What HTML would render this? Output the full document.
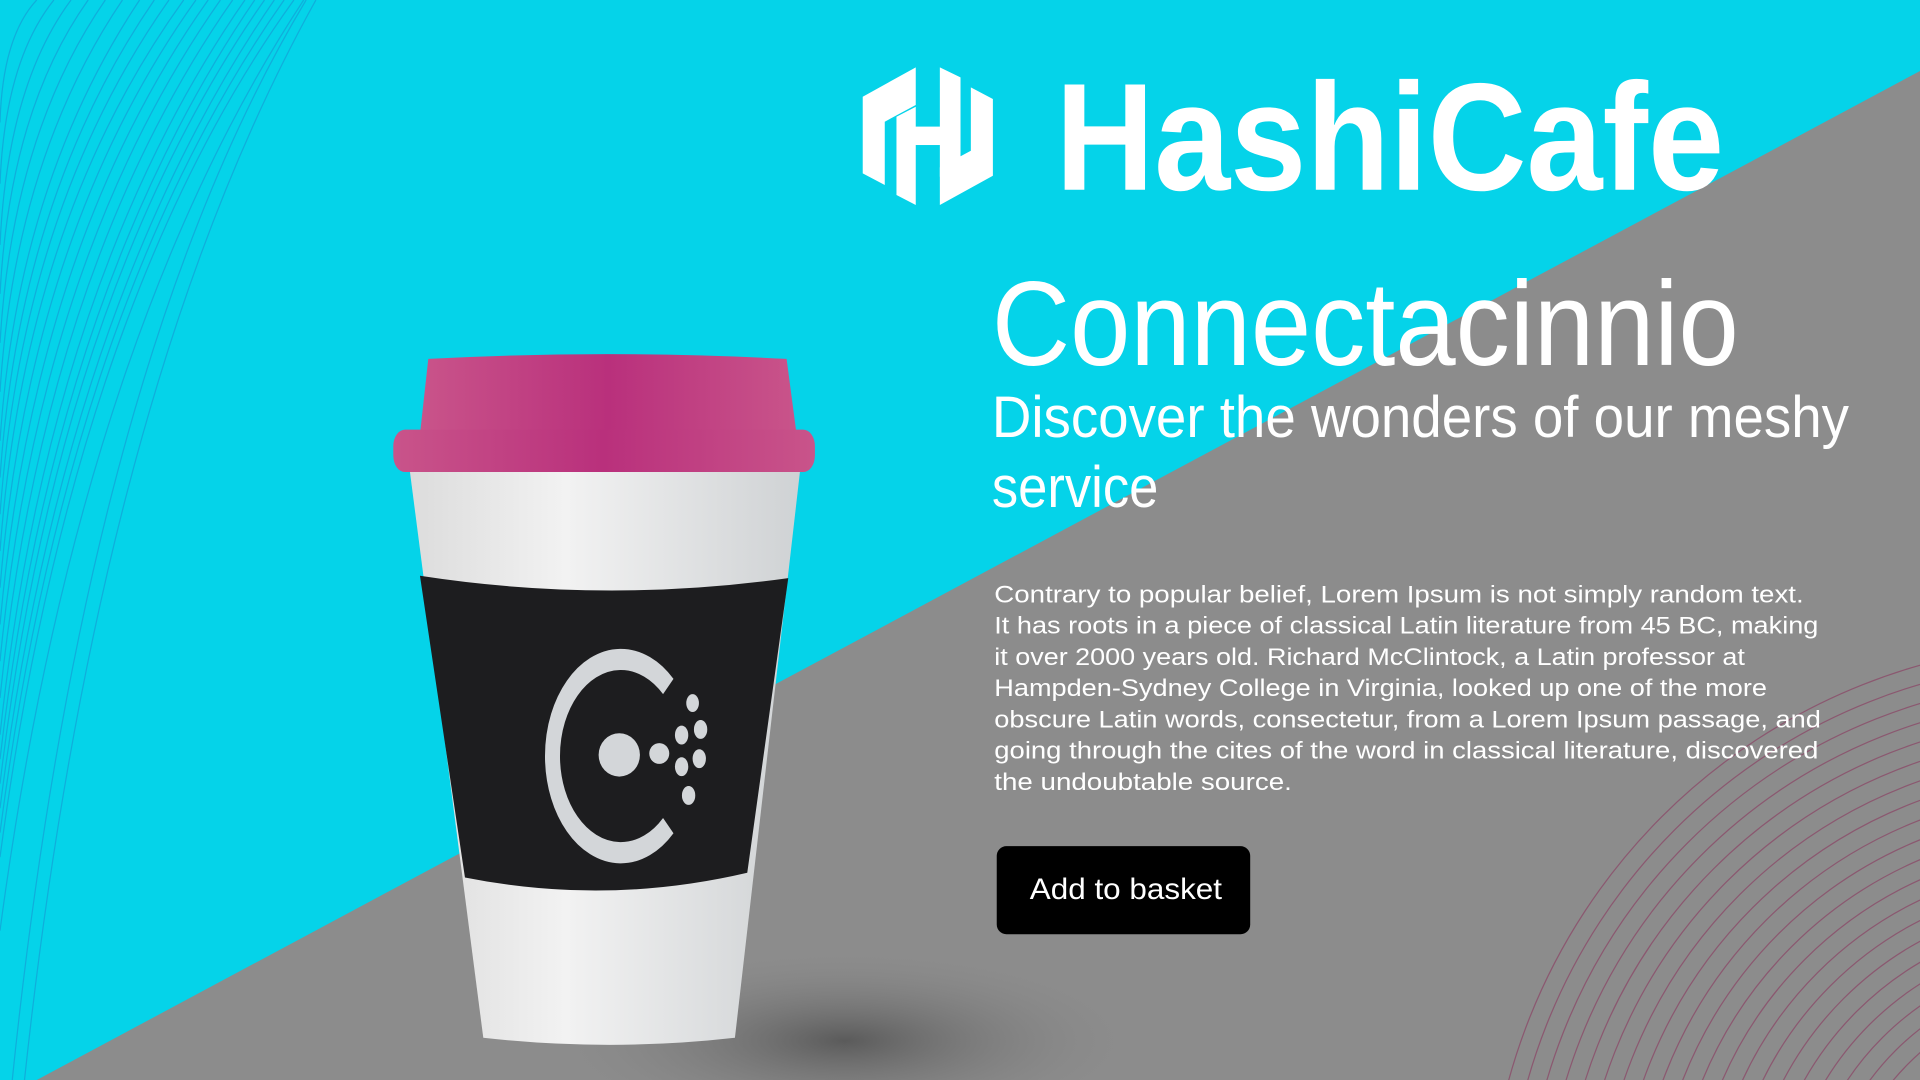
<!DOCTYPE html>
<html><head><meta charset="utf-8"><style>
html,body{margin:0;padding:0;width:1920px;height:1080px;overflow:hidden;background:#05d3e9}
svg{display:block;overflow:hidden}
</style></head><body>
<svg width="1920" height="1080" viewBox="0 0 1568 882" xmlns="http://www.w3.org/2000/svg">
<defs>
<radialGradient id="sh" cx="0.5" cy="0.5" r="0.5">
<stop offset="0" stop-color="#555" stop-opacity="0.9"/><stop offset="1" stop-color="#8a8a8a" stop-opacity="0"/>
</radialGradient>
<linearGradient id="lid" x1="0" x2="1" y1="0" y2="0">
<stop offset="0" stop-color="#c9548a"/><stop offset="0.5" stop-color="#b9307c"/><stop offset="1" stop-color="#c9548a"/>
</linearGradient>
<linearGradient id="cupg" x1="0" x2="1">
<stop offset="0" stop-color="#dcdcdc"/><stop offset="0.4" stop-color="#f2f2f2"/><stop offset="1" stop-color="#cfd2d4"/>
</linearGradient>
</defs>
<rect width="1568" height="882" fill="#05d3e9"/>
<polygon points="30,882 1568,58 1568,882" fill="#8c8c8c"/>
<ellipse cx="690" cy="850" rx="240" ry="75" fill="url(#sh)"/>
<g fill="none" stroke="#1a8fd0" stroke-opacity="0.55" stroke-width="1">
<path d="M240,0 Q60,250 0,700"/><path d="M232,0 Q56,250 0,680"/><path d="M224,0 Q52,250 0,660"/>
<path d="M216,0 Q48,240 0,640"/><path d="M208,0 Q44,240 0,620"/><path d="M200,0 Q40,230 0,600"/>
<path d="M190,0 Q36,220 0,570"/><path d="M180,0 Q32,210 0,540"/><path d="M170,0 Q28,200 0,510"/>
<path d="M160,0 Q24,190 0,480"/><path d="M150,0 Q20,180 0,450"/><path d="M138,0 Q18,170 0,420"/>
<path d="M126,0 Q16,160 0,390"/><path d="M114,0 Q14,150 0,360"/><path d="M100,0 Q12,130 0,320"/>
<path d="M86,0 Q10,110 0,280"/><path d="M72,0 Q8,90 0,240"/><path d="M58,0 Q6,70 0,200"/>
<path d="M44,0 Q4,50 0,150"/><path d="M30,0 Q2,30 0,100"/>
<path d="M250,0 Q70,300 10,882"/><path d="M258,0 Q80,320 20,882"/><path d="M248,0 Q64,280 0,760"/>
</g>
<g fill="none" stroke="#8a2e5a" stroke-opacity="0.55" stroke-width="1">
<circle cx="1700" cy="1010" r="200"/><circle cx="1700" cy="1010" r="215"/><circle cx="1700" cy="1010" r="230"/>
<circle cx="1700" cy="1010" r="245"/><circle cx="1700" cy="1010" r="260"/><circle cx="1700" cy="1010" r="275"/>
<circle cx="1700" cy="1010" r="290"/><circle cx="1700" cy="1010" r="305"/><circle cx="1700" cy="1010" r="320"/>
<circle cx="1700" cy="1010" r="335"/><circle cx="1700" cy="1010" r="350"/><circle cx="1700" cy="1010" r="365"/>
<circle cx="1700" cy="1010" r="380"/><circle cx="1700" cy="1010" r="395"/><circle cx="1700" cy="1010" r="410"/>
<circle cx="1700" cy="1010" r="425"/><circle cx="1700" cy="1010" r="440"/><circle cx="1700" cy="1010" r="455"/>
<circle cx="1700" cy="1010" r="470"/><circle cx="1700" cy="1010" r="485"/>
</g>
<!-- cup -->
<g transform="translate(310.3,277.7) scale(0.2722,0.385)">
<path d="M90,280 L1260,280 L1065,1480 Q690,1510 310,1480 Z" fill="url(#cupg)"/>
<path d="M120,500 Q670,560 1225,505 L1102,1130 Q680,1200 255,1140 Z" fill="#1d1d1f"/>
<path d="M145,40 Q680,20 1220,40 L1250,200 L120,200 Z" fill="url(#lid)"/>
<rect x="40" y="190" width="1265" height="90" rx="35" fill="url(#lid)"/>
<path d="M865,735 A205,205 0 1 0 865,1030" fill="none" stroke="#d3d6d9" stroke-width="45"/>
<g fill="#d3d6d9">
<ellipse cx="718" cy="880" rx="62" ry="46"/><ellipse cx="838" cy="877" rx="30" ry="22"/>
<circle cx="905" cy="838" r="20"/><circle cx="962" cy="826" r="20"/><circle cx="905" cy="905" r="20"/>
<circle cx="958" cy="888" r="20"/><circle cx="938" cy="770" r="19"/><circle cx="926" cy="966" r="20"/>
</g>
</g>
<!-- logo -->
<g transform="translate(686,32.7) scale(0.5624,0.2722)" fill="#fff">
<polygon points="33,170 110,82 110,195 65,245 65,435 33,400"/>
<polygon points="82,230 110,200 110,260 145,260 145,315 110,315 110,495 82,465"/>
<polygon points="145,82 175,112 175,380 145,410"/>
<rect x="110" y="260" width="65" height="55"/>
<polygon points="222,407 145,495 145,382 190,332 190,142 222,177"/>
</g>
<g fill="#fff" font-family="Liberation Sans, sans-serif">
<text x="862" y="155" font-size="125" font-weight="bold" textLength="546" lengthAdjust="spacingAndGlyphs">HashiCafe</text>
<text x="810" y="298" font-size="98" textLength="610" lengthAdjust="spacingAndGlyphs">Connectacinnio</text>
<text x="810" y="357" font-size="48" textLength="700" lengthAdjust="spacingAndGlyphs">Discover the wonders of our meshy</text>
<text x="810" y="414" font-size="48" textLength="136" lengthAdjust="spacingAndGlyphs">service</text>
<g font-size="20">
<text x="812" y="492" textLength="661" lengthAdjust="spacingAndGlyphs">Contrary to popular belief, Lorem Ipsum is not simply random text.</text>
<text x="812" y="517.5" textLength="673" lengthAdjust="spacingAndGlyphs">It has roots in a piece of classical Latin literature from 45 BC, making</text>
<text x="812" y="543" textLength="613" lengthAdjust="spacingAndGlyphs">it over 2000 years old. Richard McClintock, a Latin professor at</text>
<text x="812" y="568.5" textLength="631" lengthAdjust="spacingAndGlyphs">Hampden-Sydney College in Virginia, looked up one of the more</text>
<text x="812" y="594" textLength="675" lengthAdjust="spacingAndGlyphs">obscure Latin words, consectetur, from a Lorem Ipsum passage, and</text>
<text x="812" y="619.5" textLength="673" lengthAdjust="spacingAndGlyphs">going through the cites of the word in classical literature, discovered</text>
<text x="812" y="645" textLength="243" lengthAdjust="spacingAndGlyphs">the undoubtable source.</text>
</g>
<rect x="814" y="691" width="207" height="72" rx="8" fill="#000"/>
<text x="841" y="734" font-size="24" textLength="157" lengthAdjust="spacingAndGlyphs">Add to basket</text>
</g>
</svg>
</body></html>
